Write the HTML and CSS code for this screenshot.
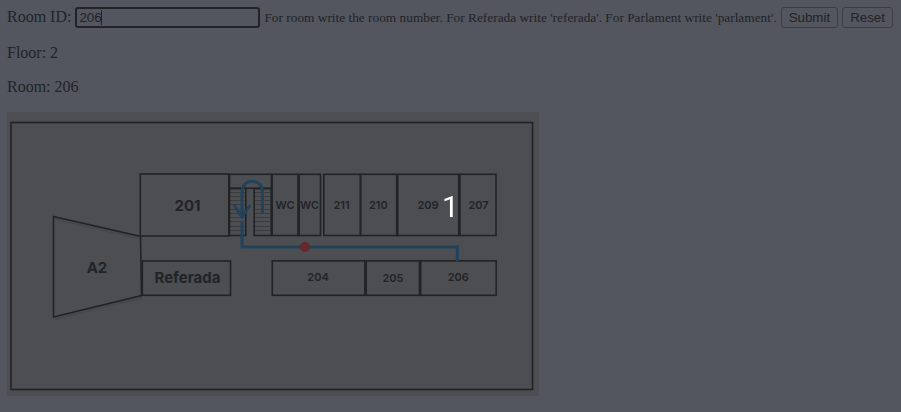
FILE: index.html
```html
<!DOCTYPE html>
<html lang="en">
<head>
<meta charset="utf-8">
<title>Room finder</title>
<link rel="stylesheet" href="styles.css">
</head>
<body>
<form class="search">
  <label for="room">Room ID:</label>
  <input class="room-input" id="room" type="text" value="206">
  <small class="hint">For room write the room number. For Referada write 'referada'. For Parlament write 'parlament'.</small>
  <button class="btn" type="submit">Submit</button>
  <button class="btn" type="reset">Reset</button>
</form>
<p>Floor: 2</p>
<p>Room: 206</p>
<svg class="map" viewBox="7 112 532 284" width="532" height="284" role="img" aria-label="Floor plan">
  <rect class="outer" x="11" y="122.500" width="521.500" height="267"/>
  <!-- lecture hall and office -->
  <path class="shade" d="M55 219L142 239M55 319L142 298"/>
  <path class="wall" d="M53.500 216.500L140.500 236.500L141.500 295.500L53.500 317Z"/>
  <rect class="wall" x="142.300" y="261" width="88.200" height="34.300"/>
  <!-- upper rooms -->
  <rect class="wall" x="140.300" y="174" width="88.500" height="62"/>
  <rect class="wall" x="229.500" y="174.300" width="42" height="14"/>
  <path class="steps" d="M230 192.500h16M230 196.500h16M230 200.500h16M230 204.500h16M230 209.500h16M230 213.500h16M230 217.500h16M230 221.500h16M230 226.500h16M230 230.500h16M254 192.500h17M254 196.500h17M254 200.500h17M254 204.500h17M254 209.500h17M254 213.500h17M254 217.500h17M254 221.500h17M254 226.500h17M254 230.500h17"/>
  <rect class="wall" x="229.500" y="188.500" width="16.300" height="47"/>
  <rect class="wall" x="254.200" y="188.500" width="17" height="47"/>
  <rect class="wall" x="272.200" y="174.300" width="25.800" height="61.200"/>
  <rect class="wall" x="299.200" y="174.300" width="21.300" height="61.200"/>
  <rect class="wall" x="323.800" y="174.300" width="36.500" height="61.200"/>
  <rect class="wall" x="360.700" y="174.300" width="36" height="61.200"/>
  <rect class="wall" x="397.700" y="174.300" width="61" height="61.200"/>
  <rect class="wall" x="460" y="174.300" width="36" height="61.200"/>
  <!-- lower rooms -->
  <rect class="wall" x="272.300" y="260.800" width="92.500" height="34.500"/>
  <rect class="wall" x="366.200" y="260.800" width="53.300" height="34.500"/>
  <rect class="wall" x="420.700" y="260.800" width="75.500" height="34.500"/>
  <!-- route -->
  <path class="route" d="M262.500 213.500V192C262.500 177.700 242 177.700 242 192V216"/>
  <path class="route arrow" d="M234.500 206L242 217L249.500 206"/>
  <path class="route" d="M242 222V247H457.300V261"/>
  <circle class="here" cx="305" cy="247" r="5"/>
  <g class="names">
    <text class="large" x="187.500" y="210.500">201</text>
    <text class="large" x="97" y="272.500">A2</text>
    <text class="large" x="187.500" y="283">Referada</text>
    <text x="285" y="209">WC</text>
    <text x="309.500" y="209">WC</text>
    <text x="341.500" y="209">211</text>
    <text x="378.300" y="209">210</text>
    <text x="428" y="209">209</text>
    <text x="478.500" y="209">207</text>
    <text x="318" y="281">204</text>
    <text x="393" y="281.500">205</text>
    <text x="458.300" y="281">206</text>
  </g>
</svg>
<div class="overlay">1</div>
</body>
</html>
```
FILE: styles.css
```css
body {
  margin: 7px;
  background: #53565e;
  color: #212327;
  font: 16px/18px "Liberation Serif", serif;
}
.search {
  display: flex;
  align-items: baseline;
  gap: 4px;
  height: 21px;
  white-space: nowrap;
}
.room-input {
  box-sizing: border-box;
  width: 185px;
  height: 21px;
  padding: 0 2px;
  border: 2px solid #212327;
  border-radius: 3px;
  outline: none;
  color: #212327;
  font-family: "Liberation Sans", sans-serif;
  font-size: smaller;
  /* text caret after the typed number */
  background: linear-gradient(#212327, #212327) 24px 1px / 1px 15px no-repeat transparent;
}
.hint {
  font-size: smaller;
}
.btn {
  box-sizing: border-box;
  height: 21px;
  padding: 0 7px;
  border: 1px solid #3b3d42;
  border-radius: 3px;
  background: transparent;
  color: #212327;
  font-family: "Liberation Sans", sans-serif;
  font-size: smaller;
}
p {
  margin: 16px 0;
}
.map {
  display: block;
  max-width: 100%;
  background: #4d4e52;
}
.outer,
.wall {
  fill: none;
  stroke: #212327;
  stroke-width: 1.6;
}
.shade {
  fill: none;
  stroke: #47484c;
  stroke-width: 2;
}
.steps {
  stroke: #3a3c40;
  stroke-width: 1;
}
.route {
  fill: none;
  stroke: #21425a;
  stroke-width: 3;
}
.arrow {
  stroke-linecap: round;
}
.here {
  fill: #64282d;
}
.names {
  fill: #212327;
  font: 600 11px Inter, sans-serif;
  text-anchor: middle;
}
.large {
  font-size: 15px;
  font-weight: 700;
}
.overlay {
  position: fixed;
  inset: 0;
  display: flex;
  align-items: center;
  justify-content: center;
  color: #fff;
  font: 30px Roboto, sans-serif;
  pointer-events: none;
}
```
